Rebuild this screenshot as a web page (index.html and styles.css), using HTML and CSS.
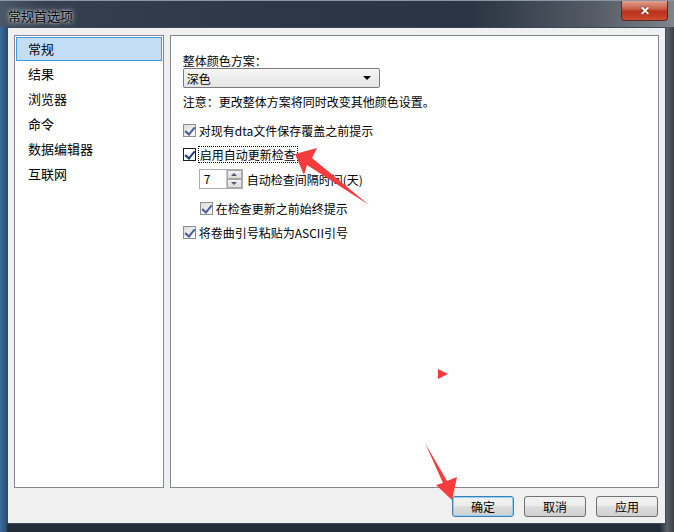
FILE: index.html
```html
<!DOCTYPE html>
<html lang="zh-CN">
<head>
    <meta charset="UTF-8">
    <title>常规首选项</title>
    <link rel="stylesheet" href="styles.css">
</head>
<body>
    <div class="window">
        <div class="titlebar">
            <span class="title">常规首选项</span>
            <div class="close-btn">&#x2715;</div>
        </div>

        <div class="client">
            <div class="panes">
                <ul class="nav-list">
                    <li class="selected">常规</li>
                    <li>结果</li>
                    <li>浏览器</li>
                    <li>命令</li>
                    <li>数据编辑器</li>
                    <li>互联网</li>
                </ul>

                <div class="settings">
                    <div class="field-label">整体颜色方案：</div>
                    <div class="dropdown">
                        <span>深色</span>
                        <span class="arrow"></span>
                    </div>
                    <div class="note">注意：更改整体方案将同时改变其他颜色设置。</div>

                    <div class="check-row first">
                        <span class="box checked"></span>
                        <span>对现有dta文件保存覆盖之前提示</span>
                    </div>
                    <div class="check-row">
                        <span class="box checked focus-box"></span>
                        <span class="focused">启用自动更新检查</span>
                    </div>
                    <div class="spin-row">
                        <div class="spin">
                            <span class="spin-value">7</span>
                            <div class="spin-btns">
                                <span class="up"></span>
                                <span class="down"></span>
                            </div>
                        </div>
                        <span>自动检查间隔时间(天)</span>
                    </div>
                    <div class="check-row indent">
                        <span class="box checked"></span>
                        <span>在检查更新之前始终提示</span>
                    </div>
                    <div class="check-row">
                        <span class="box checked"></span>
                        <span>将卷曲引号粘贴为ASCII引号</span>
                    </div>
                </div>
            </div>

            <div class="buttons">
                <button class="default">确定</button>
                <button>取消</button>
                <button>应用</button>
            </div>
        </div>

        <!-- annotation arrows drawn over the screenshot -->
        <svg class="marks" width="674" height="532" viewBox="0 0 674 532">
            <polygon fill="#f53b3b" points="295,154 317,148 312,158 369,205 307,165 304,175"/>
            <polygon fill="#f53b3b" points="425,443 447,481 457,477 452,500 436,485 443,483"/>
            <polygon fill="#f53b3b" points="438,369 448,374 438,379"/>
        </svg>
    </div>
</body>
</html>
```

FILE: styles.css
```css
* {
    box-sizing: border-box;
}
body {
    margin: 0;
    width: 674px;
    height: 532px;
    overflow: hidden;
    font-family: "Noto Sans CJK SC", "Liberation Sans", sans-serif;
    font-size: 12px;
    color: #000;
}
.window {
    position: relative;
    width: 674px;
    height: 532px;
    padding: 0 8px 8px 7px;
    display: flex;
    flex-direction: column;
    background: linear-gradient(90deg, #3b6c9e 0, #2a4c70 7px, #232d3a 7px, #232d3a 660px, #5a6068 667px, #3a3f46 674px);
}
.titlebar {
    height: 28px;
    margin: 0 -8px 0 -7px;
    padding: 0 8px;
    display: flex;
    align-items: center;
    justify-content: space-between;
    background: linear-gradient(90deg, #4a5868 0, #34404e 6%, #2c3846 40%, #2a3543 70%, #545b65 88%, #7e848b 100%);
    border-top: 1px solid #8a96a4;
}
.title {
    color: #000;
    font-size: 13px;
    padding-top: 2px;
    text-shadow: 0 0 6px rgba(255,255,255,0.7), 0 0 3px rgba(255,255,255,0.9);
}
.close-btn {
    align-self: flex-start;
    width: 47px;
    height: 20px;
    margin-right: -2px;
    border: 1px solid #5a2a22;
    border-top: none;
    border-radius: 0 0 4px 4px;
    background: linear-gradient(#e0a08e 0, #c9624a 40%, #b8321c 55%, #d04a30 100%);
    color: #fff;
    font-size: 12px;
    font-weight: bold;
    text-align: center;
    line-height: 18px;
    text-shadow: 0 0 2px #333;
}
.client {
    flex: 1;
    background: #f0f0f0;
    border: 1px solid #3a4a5c;
    padding: 7px 6px 6px 6px;
    display: flex;
    flex-direction: column;
}
.panes {
    height: 453px;
    display: flex;
    gap: 6px;
}
.nav-list {
    width: 150px;
    margin: 0;
    padding: 1px;
    list-style: none;
    background: #fff;
    border: 1px solid #828790;
}
.nav-list li {
    height: 25px;
    line-height: 25px;
    padding-left: 12px;
    font-size: 13px;
}
.nav-list li.selected {
    height: 24px;
    line-height: 22px;
    background: #c3ddf7;
    border: 1px solid #3d9be8;
    padding-left: 11px;
}
.settings {
    width: 490px;
    background: #fff;
    border: 1px solid #828790;
    padding: 17px 12px 13px 12px;
}
.field-label {
    line-height: 15px;
}
.dropdown {
    width: 197px;
    height: 20px;
    padding: 0 8px 0 3px;
    border: 1px solid #7a7a7a;
    border-radius: 2px;
    display: flex;
    align-items: center;
    justify-content: space-between;
    background: linear-gradient(#f6f6f6, #e4e4e4);
}
.dropdown .arrow {
    width: 0;
    height: 0;
    border-left: 4px solid transparent;
    border-right: 4px solid transparent;
    border-top: 4px solid #000;
}
.note {
    margin-top: 6px;
    line-height: 16px;
}
.check-row {
    height: 24px;
    display: flex;
    align-items: center;
    gap: 3px;
}
.check-row.first {
    margin-top: 8px;
}
.check-row.indent {
    padding-left: 17px;
    margin-top: 4px;
}
.box {
    width: 13px;
    height: 13px;
    border: 1px solid #8e8f8f;
    background: linear-gradient(135deg, #dcdcdc, #fbfbfb);
    position: relative;
}
.box.checked::after {
    content: "";
    position: absolute;
    left: 3px;
    top: 0px;
    width: 4px;
    height: 8px;
    border-right: 2px solid #4a5f97;
    border-bottom: 2px solid #4a5f97;
    transform: rotate(40deg);
}
.focus-box {
    border-color: #1c1c1c;
    background: #fff;
}
.focus-box::after {
    border-color: #213a7a !important;
}
.focused {
    outline: 1px dotted #000;
    padding: 0 1px;
    line-height: 15px;
}
.spin-row {
    height: 26px;
    display: flex;
    align-items: center;
    gap: 4px;
    padding-left: 16px;
}
.spin {
    width: 44px;
    height: 20px;
    border: 1px solid #abadb3;
    display: flex;
    background: #fff;
}
.spin-value {
    flex: 1;
    padding-left: 4px;
    line-height: 18px;
}
.spin-btns {
    width: 16px;
    display: flex;
    flex-direction: column;
    border-left: 1px solid #c8c8c8;
}
.spin-btns span {
    flex: 1;
    display: flex;
    align-items: center;
    justify-content: center;
    background: linear-gradient(#f4f4f4, #dcdcdc);
    border: 1px solid #a8a8a8;
}
.spin-btns .up::after {
    content: "";
    border-left: 3px solid transparent;
    border-right: 3px solid transparent;
    border-bottom: 3px solid #4a5a70;
}
.spin-btns .down::after {
    content: "";
    border-left: 3px solid transparent;
    border-right: 3px solid transparent;
    border-top: 3px solid #4a5a70;
}
.buttons {
    margin-top: 8px;
    display: flex;
    justify-content: flex-end;
    gap: 10px;
    padding-right: 1px;
}
.buttons button {
    width: 62px;
    height: 21px;
    font-family: inherit;
    font-size: 12px;
    border: 1px solid #707070;
    border-radius: 3px;
    background: linear-gradient(#f2f2f2 0, #ebebeb 50%, #dddddd 50%, #cfcfcf 100%);
    padding: 0;
}
.buttons button.default {
    border-color: #3c7fb1;
    box-shadow: inset 0 0 0 1px #8fd0f5;
}
.marks {
    position: absolute;
    left: 0;
    top: 0;
}
```
